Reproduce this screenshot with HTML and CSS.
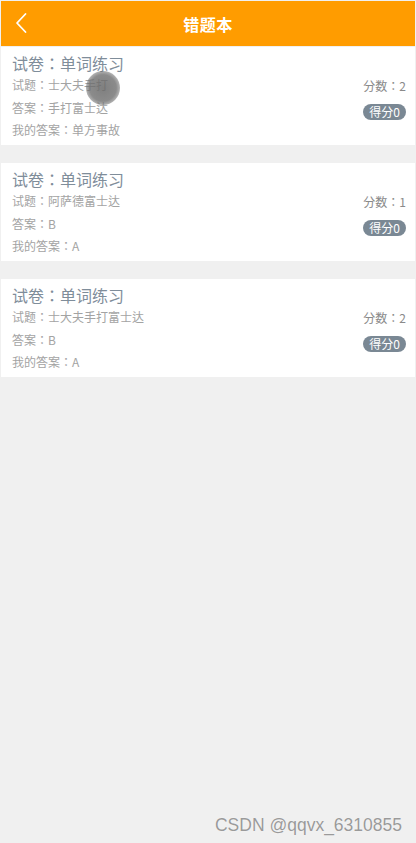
FILE: index.html
```html
<!DOCTYPE html>
<html>
<head>
<meta charset="utf-8">
<title>错题本</title>
<link rel="stylesheet" href="styles.css">
</head>
<body>
<div class="page">
  <header class="topbar">
    <span class="back">
      <svg width="14" height="22" viewBox="0 0 14 22"><path d="M11.5 2 L3 11 L11.5 20" fill="none" stroke="#fff" stroke-width="1.8" stroke-linecap="round" stroke-linejoin="round"/></svg>
    </span>
    <h1 class="title">错题本</h1>
  </header>
  <main class="list">
    <section class="card">
      <div class="info">
        <div class="paper">试卷：单词练习</div>
        <div class="row">试题：士大夫手打</div>
        <div class="row">答案：手打富士达</div>
        <div class="row">我的答案：单方事故</div>
      </div>
      <div class="side">
        <div class="score">分数：2</div>
        <div class="badge-row"><span class="badge">得分0</span></div>
      </div>
      <span class="touch"></span>
    </section>
    <section class="card">
      <div class="info">
        <div class="paper">试卷：单词练习</div>
        <div class="row">试题：阿萨德富士达</div>
        <div class="row">答案：B</div>
        <div class="row">我的答案：A</div>
      </div>
      <div class="side">
        <div class="score">分数：1</div>
        <div class="badge-row"><span class="badge">得分0</span></div>
      </div>
    </section>
    <section class="card">
      <div class="info">
        <div class="paper">试卷：单词练习</div>
        <div class="row">试题：士大夫手打富士达</div>
        <div class="row">答案：B</div>
        <div class="row">我的答案：A</div>
      </div>
      <div class="side">
        <div class="score">分数：2</div>
        <div class="badge-row"><span class="badge">得分0</span></div>
      </div>
    </section>
  </main>
  <div class="watermark">CSDN @qqvx_6310855</div>
</div>
</body>
</html>
```
FILE: styles.css
```css
html, body {
  margin: 0;
  padding: 0;
  height: 100%;
}
body {
  background: #f0f0f0;
  font-family: "Noto Sans CJK JP", "Noto Sans CJK SC", "Liberation Sans", sans-serif;
}
.page {
  position: relative;
  min-height: 843px;
  padding: 1px 1px 0 1px;
  box-sizing: border-box;
}
.topbar {
  height: 45px;
  background: #ff9c00;
  display: flex;
  align-items: center;
  justify-content: center;
  position: relative;
}
.back {
  position: absolute;
  left: 13px;
  top: 11px;
  display: flex;
}
.title {
  margin: 0;
  font-size: 16px;
  font-weight: bold;
  color: #fff;
  letter-spacing: 0.5px;
}
.list {
  display: flex;
  flex-direction: column;
  gap: 18px;
  padding-top: 1px;
}
.card {
  position: relative;
  background: #fff;
  display: flex;
  justify-content: space-between;
  padding: 5px 9px 4px 11px;
  height: 98px;
  box-sizing: border-box;
}
.paper {
  font-size: 16px;
  line-height: 22px;
  color: #7f8d9a;
}
.row {
  font-size: 12px;
  line-height: 22.5px;
  color: #a3a3a3;
}
.side {
  display: flex;
  flex-direction: column;
  align-items: flex-end;
  padding-top: 25px;
}
.score {
  font-size: 12px;
  line-height: 18px;
  color: #8a8a8a;
}
.badge-row {
  margin-top: 3px;
}
.badge {
  display: inline-block;
  background: #7a8894;
  color: #fff;
  font-size: 12px;
  line-height: 16px;
  height: 16px;
  padding: 0 6px;
  border-radius: 8px;
}
.touch {
  position: absolute;
  left: 85px;
  top: 24px;
  width: 34px;
  height: 34px;
  border-radius: 50%;
  background: radial-gradient(circle, rgba(105,105,105,0.85) 0%, rgba(110,110,110,0.8) 55%, rgba(130,130,130,0) 100%);
}
.watermark {
  position: absolute;
  right: 14px;
  bottom: 7px;
  font-family: "Liberation Sans", Arial, sans-serif;
  font-size: 17.5px;
  color: #9a9a9a;
  text-shadow: 0 0 1px #fff;
}
```
